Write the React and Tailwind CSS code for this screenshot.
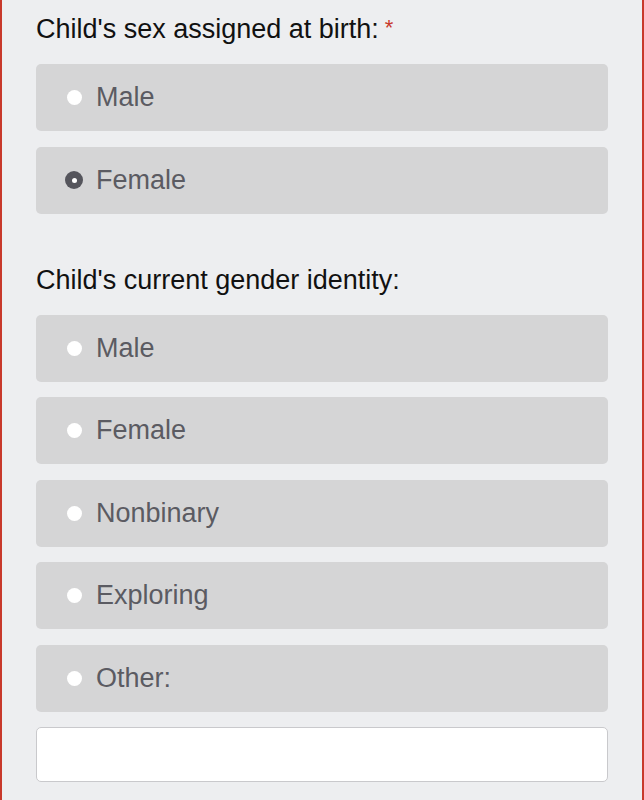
const sexOptions = [
  { label: "Male", checked: false },
  { label: "Female", checked: true },
];

const genderOptions = ["Male", "Female", "Nonbinary", "Exploring", "Other:"];

function Radio({ checked }) {
  if (checked) {
    return (
      <span className="flex h-[18px] w-[18px] items-center justify-center rounded-full bg-[#55555c]">
        <span className="h-[5px] w-[5px] rounded-full bg-white" />
      </span>
    );
  }
  return (
    <span className="flex h-[18px] w-[18px] items-center justify-center">
      <span className="h-[15px] w-[15px] rounded-full bg-white" />
    </span>
  );
}

function Option({ label, checked }) {
  return (
    <div className="flex h-[67px] items-center gap-[13px] rounded-[5px] bg-[#d5d5d6] pl-[29px]">
      <Radio checked={checked} />
      <span className="text-[27px] leading-none text-[#5b5b62]">{label}</span>
    </div>
  );
}

export default function App() {
  return (
    <div
      className="min-h-[800px] border-x-2 border-[#c8392b] bg-[#edeef0] px-[34px] pt-[14px]"
      style={{ fontFamily: '"Liberation Sans", Arial, sans-serif' }}
    >
      <p className="text-[27px] leading-[30px] text-[#111]">
        Child's sex assigned at birth:
        <span className="relative -top-[3px] ml-[6px] text-[22px] text-[#c8392b]">*</span>
      </p>
      <div className="mt-[18px] flex flex-col gap-[15.5px]">
        {sexOptions.map((o) => (
          <Option key={o.label} label={o.label} checked={o.checked} />
        ))}
      </div>

      <p className="mt-[51px] text-[27px] leading-[30px] text-[#111]">
        Child's current gender identity:
      </p>
      <div className="mt-[20px] flex flex-col gap-[15.5px]">
        {genderOptions.map((g) => (
          <Option key={g} label={g} checked={false} />
        ))}
        <input
          type="text"
          className="h-[55px] w-full rounded-[5px] border border-[#c9c9cc] bg-white"
        />
      </div>
    </div>
  );
}
